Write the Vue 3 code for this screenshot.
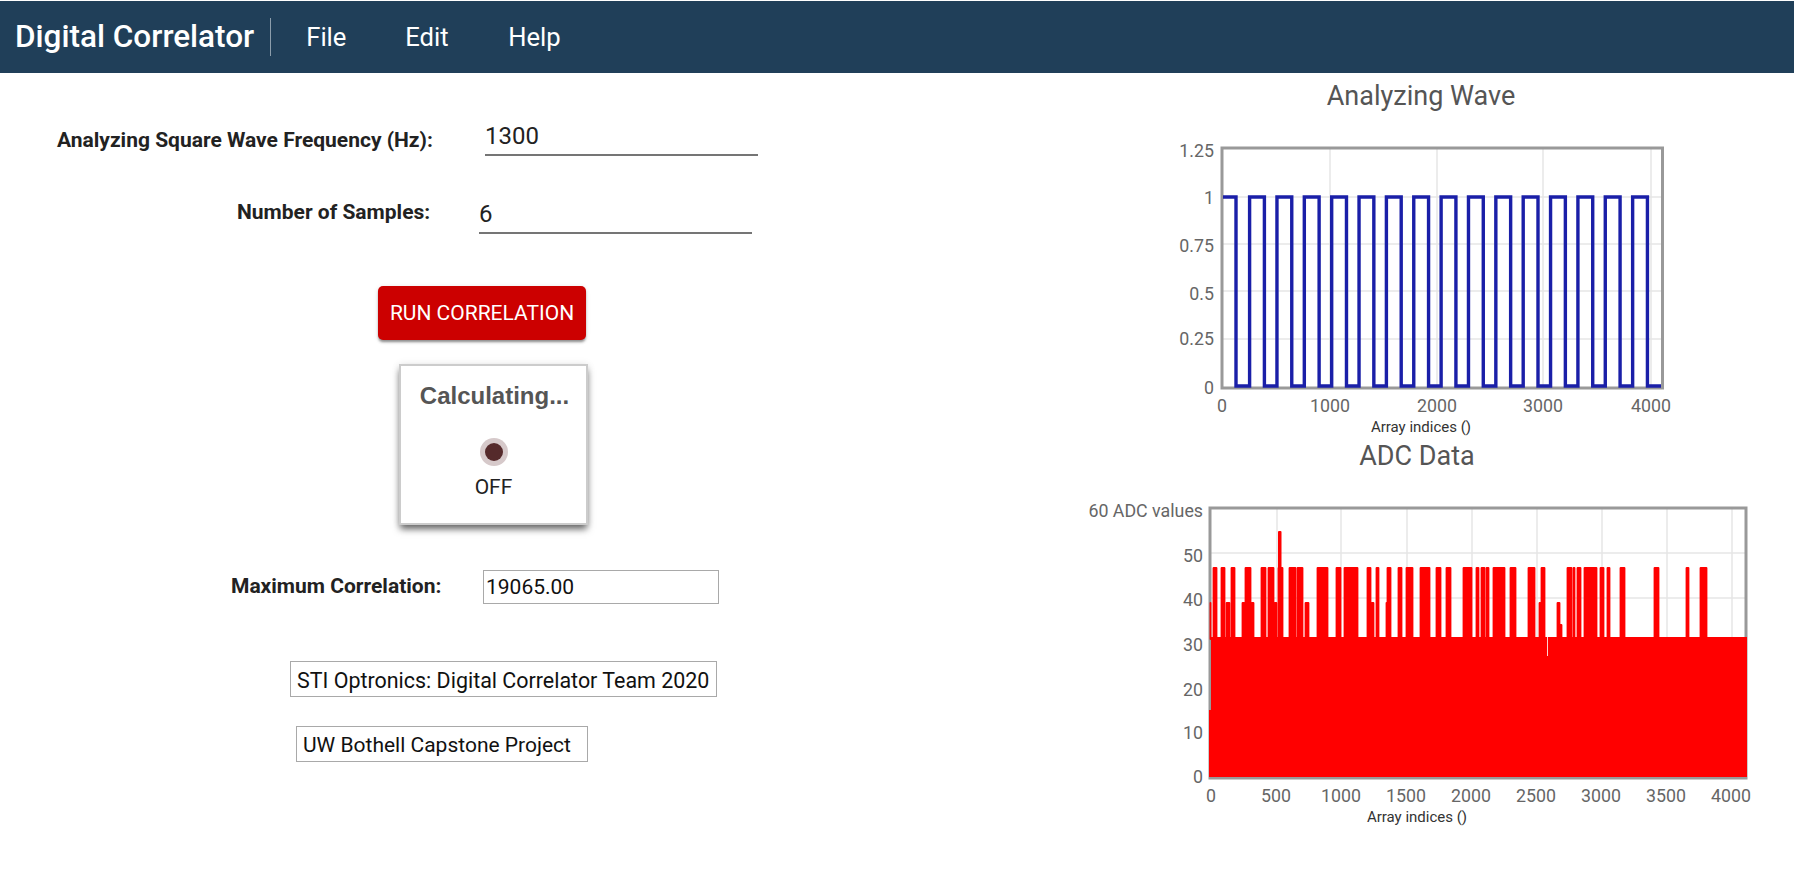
<script setup>
// chart coordinates below are page pixels, each svg sets its viewBox to its own place on the page
const waveGridX = [1330, 1437, 1543, 1651]
const waveGridY = [197, 244, 291, 339]
const waveYLabels = [
  { text: '1.25', y: 150 },
  { text: '1', y: 197 },
  { text: '0.75', y: 245 },
  { text: '0.5', y: 293 },
  { text: '0.25', y: 338 },
  { text: '0', y: 387 }
]
const waveXLabels = [
  { text: '0', x: 1222 },
  { text: '1000', x: 1330 },
  { text: '2000', x: 1437 },
  { text: '3000', x: 1543 },
  { text: '4000', x: 1651 }
]

const buildWave = () => {
  const high = 197
  const low = 386
  let d = `M1223 ${high} H1236 V${low}`
  for (let i = 0; i < 15; i++) {
    const rise = 1249.6 + i * 27.36
    d += ` H${rise} V${high} H${rise + 14.8} V${low}`
  }
  return d + ' H1661'
}
const wavePath = buildWave()

const adcGridX = [1277, 1341, 1407, 1472, 1537, 1602, 1667, 1732]
const adcGridY = [553, 598, 643, 688, 733]
const adcYLabels = [
  { text: '60 ADC values', y: 510 },
  { text: '50', y: 555 },
  { text: '40', y: 599 },
  { text: '30', y: 644 },
  { text: '20', y: 689 },
  { text: '10', y: 732 },
  { text: '0', y: 776 }
]
const adcXLabels = ['0', '500', '1000', '1500', '2000', '2500', '3000', '3500', '4000'].map((text, i) => ({
  text,
  x: 1211 + i * 65
}))

// spikes above the flat part of the signal: [from, to] in px
const level47 = [
  [1213, 1217], [1221, 1225], [1231, 1235], [1245, 1251], [1261, 1266], [1268, 1274],
  [1278, 1283], [1289, 1296], [1297, 1303], [1317, 1328], [1336, 1341], [1344, 1358],
  [1367, 1371], [1376, 1379], [1387, 1391], [1398, 1402], [1406, 1413], [1420, 1430],
  [1436, 1441], [1446, 1451], [1463, 1472], [1476, 1479], [1481, 1485], [1486, 1489],
  [1493, 1505], [1510, 1516], [1528, 1535], [1541, 1545], [1567, 1572], [1573, 1575],
  [1577, 1581], [1584, 1597], [1600, 1604], [1607, 1610], [1620, 1625], [1654, 1659],
  [1686, 1689], [1700, 1707]
]
const level39 = [
  [1210, 1211], [1226, 1230], [1242, 1245], [1251, 1254], [1274, 1277], [1305, 1309],
  [1371, 1374], [1386, 1387], [1539, 1541], [1557, 1560]
]
const level34 = [[1559, 1562]]

const toBars = (spans, top) =>
  spans.map(([from, to]) => ({ x: from - 0.4, width: to - from + 0.8, y: top, height: 640 - top }))
const adcBars = [
  ...toBars(level47, 567),
  ...toBars(level39, 602),
  ...toBars(level34, 624),
  { x: 1278, width: 3.5, y: 531, height: 109 }
]
</script>

<template>
  <nav class="navbar">
    <span class="brand">Digital Correlator</span>
    <ul class="menu">
      <li>File</li>
      <li>Edit</li>
      <li>Help</li>
    </ul>
  </nav>

  <main class="page">
    <section class="controls">
      <div class="field field-freq">
        <label class="field-label">Analyzing Square Wave Frequency (Hz):</label>
        <input class="line-input" type="text" value="1300" />
      </div>
      <div class="field field-samples">
        <label class="field-label">Number of Samples:</label>
        <input class="line-input" type="text" value="6" />
      </div>

      <button class="run-btn">RUN CORRELATION</button>

      <div class="status-card">
        <h3 class="status-title">Calculating...</h3>
        <span class="led"></span>
        <span class="led-label">OFF</span>
      </div>

      <div class="field field-max">
        <label class="field-label">Maximum Correlation:</label>
        <input class="box-input" type="text" value="19065.00" readonly />
      </div>

      <input class="note note-team" type="text" value="STI Optronics: Digital Correlator Team 2020" readonly />
      <input class="note note-uw" type="text" value="UW Bothell Capstone Project" readonly />
    </section>

    <section class="charts">
      <h2 class="chart-title title-wave">Analyzing Wave</h2>
      <svg class="chart chart-wave" width="670" height="308" viewBox="1090 130 670 308">
        <line v-for="x in waveGridX" :key="x" class="grid" :x1="x" :x2="x" y1="148" y2="388" />
        <line v-for="y in waveGridY" :key="y" class="grid" x1="1222" x2="1662" :y1="y" :y2="y" />
        <rect class="plot-border" x="1222" y="148" width="440.5" height="240" />
        <path class="wave" :d="wavePath" />
        <text v-for="l in waveYLabels" :key="l.text" class="tick" x="1214" :y="l.y" text-anchor="end" dominant-baseline="central">{{ l.text }}</text>
        <text v-for="l in waveXLabels" :key="l.text" class="tick" :x="l.x" y="405" text-anchor="middle" dominant-baseline="central">{{ l.text }}</text>
        <text class="axis-name" x="1421" y="427" text-anchor="middle" dominant-baseline="central">Array indices ()</text>
      </svg>

      <h2 class="chart-title title-adc">ADC Data</h2>
      <svg class="chart chart-adc" width="670" height="340" viewBox="1087 490 670 340">
        <line v-for="x in adcGridX" :key="x" class="grid" :x1="x" :x2="x" y1="508" y2="778" />
        <line v-for="y in adcGridY" :key="y" class="grid" x1="1210" x2="1746" :y1="y" :y2="y" />
        <rect class="plot-border" x="1210" y="508" width="536" height="270" />
        <rect v-for="(b, i) in adcBars" :key="i" class="adc-bar" :x="b.x" :y="b.y" :width="b.width" :height="b.height" rx="1" />
        <rect class="adc-bar" x="1211" y="637" width="536" height="140" />
        <rect class="adc-bar" x="1209" y="710" width="3" height="67" />
        <rect x="1547" y="637" width="1" height="19" fill="#ffd0d0" />
        <text v-for="l in adcYLabels" :key="l.text" class="tick" x="1203" :y="l.y" text-anchor="end" dominant-baseline="central">{{ l.text }}</text>
        <text v-for="l in adcXLabels" :key="l.text" class="tick" :x="l.x" y="795" text-anchor="middle" dominant-baseline="central">{{ l.text }}</text>
        <text class="axis-name" x="1417" y="817" text-anchor="middle" dominant-baseline="central">Array indices ()</text>
      </svg>
    </section>
  </main>
</template>

<style scoped>
.navbar {
  display: flex;
  align-items: center;
  height: 72px;
  margin-top: 1px;
  background-color: #203f59;
  color: #fff;
  font-family: Roboto, sans-serif;
}

.brand {
  margin-left: 15px;
  padding-right: 16px;
  height: 38px;
  line-height: 38px;
  border-right: 1px solid #8c9dab;
  font-size: 31.5px;
  font-weight: 500;
  white-space: nowrap;
}

.menu {
  display: flex;
  list-style: none;
  margin: 0 0 0 35px;
  padding: 0;
  font-size: 25.6px;
}

.menu li:nth-child(1) {
  width: 99px;
}

.menu li:nth-child(2) {
  width: 103px;
}

.page {
  display: flex;
  font-family: Roboto, sans-serif;
}

.controls {
  display: flex;
  flex-direction: column;
  align-items: flex-start;
  width: 1090px;
  flex-shrink: 0;
}

.field {
  display: flex;
  align-items: flex-start;
}

.field-label {
  font-size: 21px;
  font-weight: 700;
  color: #222;
  white-space: nowrap;
}

.field-freq {
  margin: 45px 0 0 57px;
}

.field-freq .field-label {
  margin-top: 10px;
  width: 428px;
}

.field-samples {
  margin: 40px 0 0 237px;
}

.field-samples .field-label {
  margin-top: 4px;
  width: 242px;
}

.line-input {
  width: 273px;
  height: 38px;
  box-sizing: border-box;
  padding: 0;
  border: none;
  border-bottom: 2px solid #757575;
  outline: none;
  font-family: inherit;
  font-size: 24px;
  color: #222;
}

.run-btn {
  margin: 52px 0 0 378px;
  padding: 0;
  width: 208px;
  height: 54px;
  border: none;
  border-radius: 5px;
  background-color: #cc0000;
  color: #fff;
  font-family: inherit;
  font-size: 21px;
  box-shadow: 0 3px 3px -1px rgba(0, 0, 0, 0.3), 0 2px 2px 0 rgba(0, 0, 0, 0.14), 0 1px 5px 0 rgba(0, 0, 0, 0.12);
  cursor: pointer;
}

.status-card {
  display: flex;
  flex-direction: column;
  align-items: center;
  box-sizing: border-box;
  margin: 24px 0 0 399px;
  width: 189px;
  height: 161px;
  border: 2px solid #ccc;
  background: #fff;
  box-shadow: 0 5px 7px -1px rgba(0, 0, 0, 0.6), 0 0 8px rgba(0, 0, 0, 0.08);
}

.status-title {
  margin: 16px 0 0 2px;
  font-family: "Liberation Sans", Arial, sans-serif;
  font-size: 24px;
  line-height: 28px;
  font-weight: 700;
  color: #555;
}

.led {
  margin-top: 33px;
  width: 18px;
  height: 18px;
  border-radius: 50%;
  background: #552a2b;
  box-shadow: 0 0 0 5px #d6c9ca;
}

.led-label {
  margin-top: 14px;
  font-size: 21px;
  color: #222;
}

.field-max {
  margin: 45px 0 0 231px;
  align-items: center;
}

.field-max .field-label {
  width: 252px;
  margin-top: -3px;
}

.box-input {
  width: 236px;
  height: 34px;
  box-sizing: border-box;
  padding: 0 2px;
  border: 1px solid #a9a9a9;
  outline: none;
  font-family: inherit;
  font-size: 21px;
  color: #111;
}

.note {
  height: 36px;
  box-sizing: border-box;
  padding: 2px 6px 0;
  border: 1px solid #a9a9a9;
  outline: none;
  font-family: inherit;
  font-size: 21px;
  color: #111;
}

.note-team {
  margin: 57px 0 0 290px;
  width: 427px;
  font-size: 21.45px;
}

.note-uw {
  margin: 29px 0 0 296px;
  width: 292px;
}

.charts {
  display: flex;
  flex-direction: column;
  flex-shrink: 0;
  width: 704px;
}

.chart-title {
  margin: 0;
  font-size: 27px;
  line-height: 32px;
  font-weight: 400;
  color: #555;
  text-align: center;
}

.title-wave {
  width: 662px;
  margin-top: 7px;
}

.title-adc {
  width: 654px;
  margin-top: 2px;
}

.chart {
  display: block;
  flex-shrink: 0;
}

.chart-wave {
  margin-top: 18px;
}

.chart-adc {
  margin-top: 18px;
  margin-left: -3px;
}

.grid {
  stroke: #e6e6e6;
  stroke-width: 1.5;
}

.plot-border {
  fill: none;
  stroke: #999;
  stroke-width: 3;
}

.wave {
  fill: none;
  stroke: #1a1fa8;
  stroke-width: 3.4;
}

.adc-bar {
  fill: #ff0000;
}

.tick {
  font-size: 17.8px;
  fill: #666;
}

.axis-name {
  font-size: 15px;
  fill: #333;
}
</style>

<style>
body {
  background: #fff;
}
</style>
